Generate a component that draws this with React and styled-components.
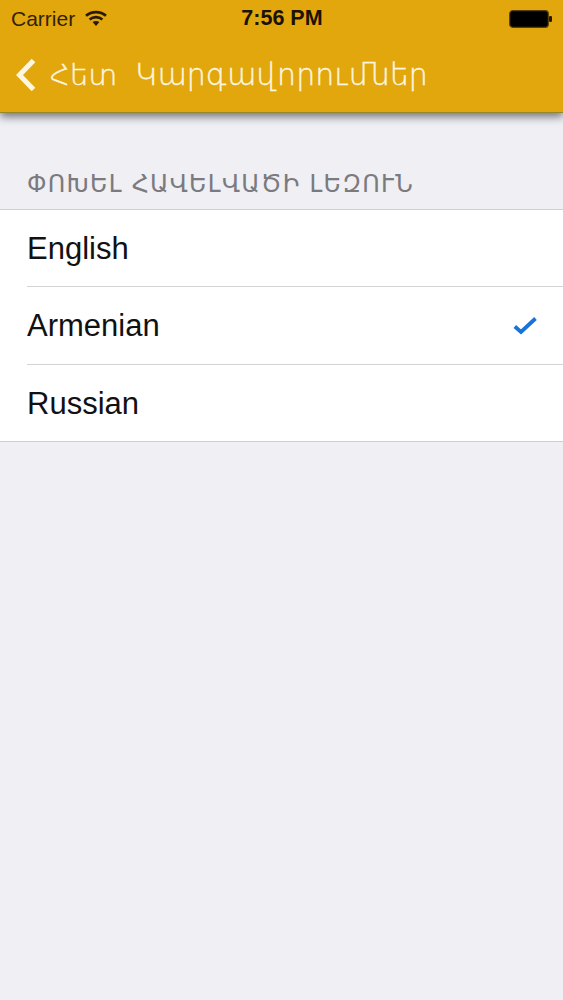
import React from "react";
import styled, { createGlobalStyle } from "styled-components";

const Global = createGlobalStyle`
  html, body { margin: 0; padding: 0; background: #efeff4; }
  body { font-family: "Liberation Sans", Arial, sans-serif; }
`;
const Page = styled.div`
  width: 563px; height: 1000px; background: #efeff4; overflow: hidden;
`;
const Header = styled.header`
  height: 113px; background: #e1a70c; display: flex; flex-direction: column;
  box-shadow: 0 4px 8px rgba(40, 40, 50, 0.6);
  border-bottom: 1px solid #94862c; box-sizing: border-box;
`;
const StatusBar = styled.div`
  height: 37px; display: grid; grid-template-columns: 1fr auto 1fr; align-items: center;
  padding: 0 10px 0 11px; color: #2a1a04; font-size: 21px;
`;
const StatusLeft = styled.div`display: flex; align-items: center; gap: 10px; color: #33220a;`;
const Clock = styled.div`font-weight: 700; font-size: 21.5px; color: #1c1203;`;
const StatusRight = styled.div`display: flex; justify-content: flex-end;`;
const NavBar = styled.nav`
  flex: 1; display: flex; align-items: center; padding: 0 0 0 15px; color: #fdf6e0;
  font-family: "DejaVu Sans", "Noto Sans", sans-serif; font-weight: 200;
  -webkit-text-stroke: 0.4px #fdf6e0;
`;
const BackLabel = styled.span`font-size: 29px; margin-left: 13px;`;
const Title = styled.span`font-size: 30px; margin-left: 18px;`;
const SectionTitle = styled.div`
  margin: 0; padding: 57px 0 11px 27px; font-size: 24px; line-height: 28px; letter-spacing: 1.25px;
  color: #7a7a7f; font-family: "DejaVu Sans", "Noto Sans", sans-serif;
`;
const List = styled.ul`
  list-style: none; margin: 0; padding: 0; background: #fff;
  border-top: 1px solid #cfcfd2; border-bottom: 1px solid #cfcfd2;
`;
const Row = styled.li`
  box-sizing: border-box; height: 77px; margin-left: 27px; display: flex; align-items: center;
  justify-content: space-between; padding: 1px 26px 0 0; font-size: 31px; color: #111;
  &:first-child { height: 76px; }
  &:nth-child(2) { height: 78px; padding-top: 0; }
  & + & { border-top: 1px solid #d4d4d6; }
`;

const Wifi = () => (
  <svg width="22" height="17" viewBox="0 0 22 17">
    <g fill="none" stroke="#2a1a04" strokeWidth="2.6">
      <path d="M1 5.8C6.6.9 15.4.9 21 5.8" />
      <path d="M4.6 9.4c3.6-3 9.2-3 12.8 0" />
    </g>
    <path d="M7.6 12.1c2-1.5 4.8-1.5 6.8 0L11 16z" fill="#2a1a04" />
  </svg>
);
const Battery = () => (
  <svg width="44" height="18" viewBox="0 0 44 18">
    <rect x="0.7" y="0.7" width="38.6" height="16.6" rx="3" fill="#000" stroke="#5a3d0a" strokeWidth="1.2" />
    <rect x="40" y="6" width="3" height="6" rx="1.2" fill="#2a1a04" />
  </svg>
);
const Chevron = () => (
  <svg width="22" height="36" viewBox="0 0 22 36">
    <path d="M18.5 3.5 4.5 18l14 14.500" fill="none" stroke="#fdf6e0" strokeWidth="5" />
  </svg>
);
const Check = () => (
  <svg width="24" height="19" viewBox="0 0 24 19">
    <path d="M1.800 10.500 8 16 22.500 2.500" fill="none" stroke="#1a73d8" strokeWidth="3.800" />
  </svg>
);

const languages = [
  { name: "English" },
  { name: "Armenian", selected: true },
  { name: "Russian" },
];

export default function App() {
  return (
    <Page>
      <Global />
      <Header>
        <StatusBar>
          <StatusLeft>Carrier <Wifi /></StatusLeft>
          <Clock>7:56 PM</Clock>
          <StatusRight><Battery /></StatusRight>
        </StatusBar>
        <NavBar>
          <Chevron />
          <BackLabel>Հետ</BackLabel>
          <Title>Կարգավորումներ</Title>
        </NavBar>
      </Header>
      <SectionTitle>ՓՈԽԵԼ ՀԱՎԵԼՎԱԾԻ ԼԵԶՈՒՆ</SectionTitle>
      <List>
        {languages.map((l) => (
          <Row key={l.name}>
            {l.name}
            {l.selected && <Check />}
          </Row>
        ))}
      </List>
    </Page>
  );
}
